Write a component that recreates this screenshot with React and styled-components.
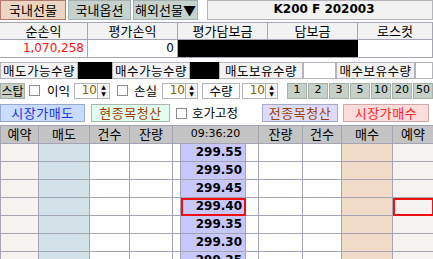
import React from 'react';
import styled, { createGlobalStyle } from 'styled-components';

const Global = createGlobalStyle`
  body {
    margin: 0;
    background: #ffffff;
    font-family: "Noto Sans CJK KR", "DejaVu Sans", sans-serif;
    font-size: 12px;
    line-height: 1.1;
    color: #000;
  }
`;

const Page = styled.div`
  width: 433px;
  height: 259px;
  overflow: hidden;
  display: flex;
  flex-direction: column;
  & > * {
    flex-shrink: 0;
  }
`;

const TopBar = styled.div`
  display: flex;
  height: 20px;
  gap: 2px;
`;

const tabColors = {
  on: { bg: '#ecd6c2', border: '#b07a70' },
  off: { bg: '#c6d2ce', border: '#a6b0ae' },
};

const Tab = styled.div`
  width: ${p => p.w}px;
  box-sizing: border-box;
  background: ${p => tabColors[p.kind].bg};
  border: 1px solid ${p => tabColors[p.kind].border};
  display: flex;
  align-items: center;
  justify-content: center;
  font-size: 13px;
  white-space: nowrap;
`;

const Title = styled.div`
  flex: 1;
  margin-left: 7px;
  background: #f2f2f2;
  border: 1px solid #b4b4bc;
  box-sizing: border-box;
  display: flex;
  align-items: center;
  justify-content: center;
  font-family: "DejaVu Sans", sans-serif;
  font-weight: bold;
  font-size: 12px;
  padding-left: 8px;
`;

const Summary = styled.div`
  margin-top: 2px;
  display: grid;
  grid-template-columns: 88px 90px 90px 90px 75px;
  grid-auto-rows: 17px;
  border-top: 1px solid #a4a4b4;
  border-bottom: 1px solid #a4a4b4;
`;

const SumHead = styled.div`
  background: #f2f2f2;
  border-right: 1px solid #a4a4b4;
  border-bottom: 1px solid #a4a4b4;
  display: flex;
  align-items: center;
  justify-content: center;
  font-size: 13px;
  white-space: nowrap;
`;

const SumCell = styled.div`
  background: ${p => (p.masked ? '#000' : '#fff')};
  border-right: 1px solid ${p => (p.masked ? '#000' : '#a4a4b4')};
  display: flex;
  align-items: center;
  justify-content: flex-end;
  padding-right: 3px;
  color: ${p => p.color || '#000'};
  font-family: "DejaVu Sans", sans-serif;
  font-size: 12px;
`;

const QtyRow = styled.div`
  margin-top: 4px;
  display: flex;
  height: 17px;
`;

const QtyLabel = styled.div`
  width: ${p => p.w}px;
  box-sizing: border-box;
  background: #f2f2f2;
  border: 1px solid #b4b4bc;
  display: flex;
  align-items: center;
  justify-content: center;
  font-size: 12.5px;
  letter-spacing: 0.5px;
  white-space: nowrap;
  flex-shrink: 0;
`;

const QtyValue = styled.div`
  width: ${p => p.w}px;
  box-sizing: border-box;
  background: ${p => (p.masked ? '#000' : '#fff')};
  border: 1px solid ${p => (p.masked ? '#000' : '#b4b4bc')};
  flex-shrink: 0;
`;

const ControlRow = styled.div`
  margin-top: 3px;
  display: flex;
  align-items: center;
  height: 17px;
  overflow: hidden;
`;

const GreenBtn = styled.div`
  width: ${p => p.w}px;
  height: 16px;
  box-sizing: border-box;
  background: #c6d0c8;
  border: 1px solid #a8b0aa;
  display: flex;
  align-items: center;
  justify-content: center;
  font-family: ${p => (p.num ? '"DejaVu Sans", sans-serif' : 'inherit')};
  font-size: ${p => (p.num ? 11 : 12)}px;
  white-space: nowrap;
  flex-shrink: 0;
`;

const Check = styled.span`
  width: 11px;
  height: 11px;
  margin-left: ${p => p.ml}px;
  box-sizing: border-box;
  border: 1px solid #8c8c8c;
  background: #fff;
  flex-shrink: 0;
`;

const Caption = styled.span`
  width: ${p => p.w}px;
  margin-left: ${p => p.ml}px;
  font-size: 12.5px;
  white-space: nowrap;
  flex-shrink: 0;
`;

const Spin = styled.div`
  display: flex;
  height: 16px;
  margin-left: ${p => p.ml}px;
  flex-shrink: 0;
`;

const SpinInput = styled.div`
  width: 24px;
  box-sizing: border-box;
  background: #fff;
  border: 1px solid #b4b4bc;
  display: flex;
  align-items: center;
  justify-content: flex-end;
  color: #806000;
  font-family: "DejaVu Sans", sans-serif;
  font-size: 12px;
`;

const SpinArrows = styled.div`
  width: 12px;
  box-sizing: border-box;
  border: 1px solid #b4b4bc;
  border-left: none;
  background: #f4f4f4;
  display: flex;
  flex-direction: column;
  align-items: center;
  justify-content: space-around;
  font-family: "DejaVu Sans", sans-serif;
  font-size: 6px;
  line-height: 6px;
`;

const LabelBox = styled.div`
  width: 38px;
  height: 16px;
  margin-left: ${p => p.ml}px;
  box-sizing: border-box;
  border: 1px solid #b4b4bc;
  background: #fff;
  display: flex;
  align-items: center;
  justify-content: center;
  font-size: 12.5px;
  flex-shrink: 0;
`;

const NumGroup = styled.div`
  display: flex;
  gap: 1px;
  margin-left: 9px;
  flex-shrink: 0;
`;

const ActionRow = styled.div`
  margin-top: 5px;
  display: flex;
  align-items: center;
  height: 18px;
`;

const actionTones = {
  sell: { bg: '#c8dcff', border: '#98a8d0', color: '#1830e8' },
  one: { bg: '#e0fff0', border: '#a8b8b0', color: '#a04000' },
  all: { bg: '#dcdcff', border: '#a8a8c8', color: '#a04000' },
  buy: { bg: '#ffdcdc', border: '#d0a8a8', color: '#ff2020' },
};

const ActionBtn = styled.div`
  width: ${p => p.w}px;
  height: 18px;
  margin-left: ${p => p.ml || 0}px;
  box-sizing: border-box;
  background: ${p => actionTones[p.tone].bg};
  border: 1px solid ${p => actionTones[p.tone].border};
  color: ${p => actionTones[p.tone].color};
  display: flex;
  align-items: center;
  justify-content: center;
  font-size: 13px;
  letter-spacing: 0.5px;
  white-space: nowrap;
  flex-shrink: 0;
`;

const Grid = styled.table`
  margin-top: 3px;
  border-collapse: collapse;
  table-layout: fixed;
  width: 433px;
`;

const Th = styled.th`
  height: 17px;
  padding: 0;
  background: #c4c4c4;
  border: 1px solid #a4a4b4;
  font-weight: normal;
  font-size: ${p => (p.time ? 11 : 13)}px;
  font-family: ${p => (p.time ? '"DejaVu Sans", sans-serif' : 'inherit')};
  white-space: nowrap;
`;

const colBg = {
  rsv: '#f5f2ef',
  sell: '#d2e2e8',
  blank: '#ffffff',
  price: '#c8c8ff',
  buy: '#f0dcc8',
};

const Td = styled.td`
  height: 17px;
  padding: 0 3px 0 0;
  background: ${p => colBg[p.tone]};
  border: 1px solid #a4a4b4;
  ${p => p.hot && 'outline: 2px solid #ee1010; outline-offset: -2px;'}
  text-align: right;
  font-family: "DejaVu Sans", sans-serif;
  font-weight: bold;
  font-size: 12px;
`;

const widths = [38, 51, 40, 43, 8, 65, 13, 44, 39, 51, 41];
const tones = ['rsv', 'sell', 'blank', 'blank', 'blank', 'price', 'blank', 'blank', 'blank', 'buy', 'rsv'];
const prices = ['299.55', '299.50', '299.45', '299.40', '299.35', '299.30', '299.25'];

const SpinBox = ({ ml }) => (
  <Spin ml={ml}>
    <SpinInput>10</SpinInput>
    <SpinArrows><span>▲</span><span>▼</span></SpinArrows>
  </Spin>
);

export default function App() {
  return (
    <Page>
      <Global />
      <TopBar>
        <Tab kind="on" w={66}>국내선물</Tab>
        <Tab kind="off" w={63}>국내옵션</Tab>
        <Tab kind="off" w={65}>해외선물▼</Tab>
        <Title>K200 F 202003</Title>
      </TopBar>

      <Summary>
        <SumHead>순손익</SumHead>
        <SumHead>평가손익</SumHead>
        <SumHead>평가담보금</SumHead>
        <SumHead>담보금</SumHead>
        <SumHead>로스컷</SumHead>
        <SumCell color="#ff1010">1,070,258</SumCell>
        <SumCell>0</SumCell>
        <SumCell masked />
        <SumCell masked />
        <SumCell />
      </Summary>

      <QtyRow>
        <QtyLabel w={78}>매도가능수량</QtyLabel>
        <QtyValue masked w={34} />
        <QtyLabel w={78}>매수가능수량</QtyLabel>
        <QtyValue masked w={29} />
        <QtyLabel w={84}>매도보유수량</QtyLabel>
        <QtyValue w={33} />
        <QtyLabel w={79}>매수보유수량</QtyLabel>
        <QtyValue w={18} />
      </QtyRow>

      <ControlRow>
        <GreenBtn w={25}>스탑</GreenBtn>
        <Check ml={4} />
        <Caption ml={7} w={22}>이익</Caption>
        <SpinBox ml={5} />
        <Check ml={7} />
        <Caption ml={6} w={22}>손실</Caption>
        <SpinBox ml={6} />
        <LabelBox ml={4}>수량</LabelBox>
        <SpinBox ml={2} />
        <NumGroup>
          {['1', '2', '3', '5', '10', '20', '50', '100'].map(n => (
            <GreenBtn key={n} num w={20}>{n}</GreenBtn>
          ))}
        </NumGroup>
      </ControlRow>

      <ActionRow>
        <ActionBtn tone="sell" w={85}>시장가매도</ActionBtn>
        <ActionBtn tone="one" w={79} ml={6}>현종목청산</ActionBtn>
        <Check ml={6} />
        <Caption ml={5} w={52}>호가고정</Caption>
        <ActionBtn tone="all" w={76} ml={18}>전종목청산</ActionBtn>
        <ActionBtn tone="buy" w={86} ml={5}>시장가매수</ActionBtn>
      </ActionRow>

      <Grid>
        <colgroup>
          {widths.map((w, i) => <col key={i} style={{ width: w }} />)}
        </colgroup>
        <thead>
          <tr>
            <Th>예약</Th>
            <Th>매도</Th>
            <Th>건수</Th>
            <Th>잔량</Th>
            <Th time colSpan={3}>09:36:20</Th>
            <Th>잔량</Th>
            <Th>건수</Th>
            <Th>매수</Th>
            <Th>예약</Th>
          </tr>
        </thead>
        <tbody>
          {prices.map(p => (
            <tr key={p}>
              {tones.map((t, i) => (
                <Td key={i} tone={t} hot={p === '299.40' && (i === 5 || i === 10)}>
                  {i === 5 ? p : ''}
                </Td>
              ))}
            </tr>
          ))}
        </tbody>
      </Grid>
    </Page>
  );
}
